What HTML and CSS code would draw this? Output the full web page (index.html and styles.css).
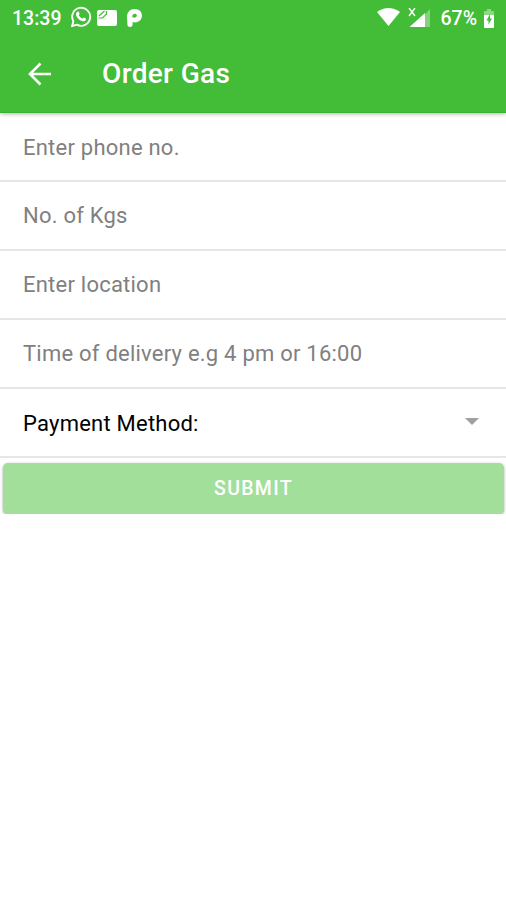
FILE: index.html
```html
<!DOCTYPE html>
<html lang="en">

<head>
    <meta charset="UTF-8">
    <meta name="viewport" content="width=device-width, initial-scale=1.0">
    <title>Order Gas</title>
    <link rel="stylesheet" href="styles.css">
</head>

<body>
    <header class="header">
        <div class="status-bar">
            <div class="status-left">
                <span class="clock">13:39</span>
                <svg class="icon-whatsapp" width="22" height="22" viewBox="0 0 22 22">
                    <path d="M2 20.2l1.4-4.9a9 9 0 1 1 3.5 3.4z" fill="none" stroke="#fff" stroke-width="1.9" stroke-linejoin="round" />
                    <path d="M7.5 5.8c.5-.4 1.1-.3 1.3.2l.8 1.8c.1.4-.6 1.2-.8 1.5.8 1.6 2 2.7 3.6 3.4.4-.3 1.1-1.3 1.5-1.1l1.9.9c.6.3-.1 2-.9 2.5-1 .6-2.3.5-4.2-.5-2-1-3.6-2.8-4.4-4.6-.7-1.7-.1-3.2 1.2-4.1z" fill="#fff" />
                </svg>
                <svg class="icon-card" width="20" height="16" viewBox="0 0 20 16">
                    <path d="M2 0H18a2 2 0 0 1 2 2v12a2 2 0 0 1-2 2H2a2 2 0 0 1-2-2V2a2 2 0 0 1 2-2z" fill="#fff" />
                    <path d="M1.5 8h4L9.500 4V1M2 6L7.500 1" fill="none" stroke="#43bc37" stroke-width="1.2" />
                </svg>
                <svg class="icon-p" width="15" height="18" viewBox="0 0 15 18">
                    <path d="M0 7.500C0 3 3.400 0 7.600 0 11.800 0 15 2.800 15 6.600c0 4-3.200 6.800-7 6.800-.9 0-1.700-.1-2.400-.4V15.300a2.600 2.600 0 0 1-5.200 0zM5.200 7.800C5.800 9 9.800 9.200 9.800 6.600 9.800 3.800 5.200 4 5.200 7.800z" fill="#fff" fill-rule="evenodd" />
                </svg>
            </div>
            <div class="status-right">
                <svg class="icon-wifi" width="23" height="18" viewBox="0 0 23 18">
                    <path d="M0 4Q11.500-4 23 4L11.500 18z" fill="#fff" />
                </svg>
                <svg class="icon-signal" width="23" height="21" viewBox="0 0 23 21">
                    <path d="M22 1v18h-5.500V7z" fill="#fff" opacity=".35" />
                    <path d="M17 5V19H1.500z" fill="#fff" />
                    <path d="M1 0l6 8M7 0L1 8" stroke="#fff" stroke-width="1.400" />
                </svg>
                <span class="percent">67%</span>
                <svg class="icon-battery" width="10" height="19" viewBox="0 0 10 19">
                    <path d="M0 3a1 1 0 0 1 1-1h2V0h4v2h2a1 1 0 0 1 1 1v3H0z" fill="#fff" opacity=".4" />
                    <path d="M0 6h10V18a1 1 0 0 1-1 1H1a1 1 0 0 1-1-1z" fill="#fff" />
                    <path d="M6 5L2.500 11.500h2v4L8 9.500H6z" fill="#43bc37" />
                </svg>
            </div>
        </div>
        <div class="toolbar">
            <button class="back" type="button" aria-label="Back">
                <svg width="24" height="24" viewBox="0 0 24 24">
                    <path d="M23 12H2.500M12.500 1.500L2 12l10.500 10.500" fill="none" stroke="#fff" stroke-width="2.600" />
                </svg>
            </button>
            <h1 class="title">Order Gas</h1>
        </div>
    </header>

    <form class="order-form">
        <input class="field" type="text" placeholder="Enter phone no.">
        <input class="field" type="text" placeholder="No. of Kgs">
        <input class="field" type="text" placeholder="Enter location">
        <input class="field" type="text" placeholder="Time of delivery e.g 4 pm or 16:00">
        <div class="field select">
            <span>Payment Method:</span>
            <span class="arrow"></span>
        </div>
        <button class="submit" type="submit" disabled>SUBMIT</button>
    </form>
</body>

</html>
```
FILE: styles.css
```css
* {
    box-sizing: border-box;
}

body {
    margin: 0;
    background-color: #fff;
    font-family: Roboto, sans-serif;
}

.header {
    height: 113px;
    background-color: #43bc37;
    border-bottom: 1px solid #3cb031;
    box-shadow: 0 1px 4px rgba(0, 0, 0, 0.3);
    color: #fff;
}

.status-bar {
    display: flex;
    justify-content: space-between;
    height: 36px;
    padding: 0 12px;
    font-size: 19.5px;
    font-weight: 500;
}

.status-left,
.status-right {
    display: flex;
    align-items: center;
}

.icon-whatsapp {
    margin-left: 9px;
    margin-bottom: 2px;
}

.icon-card {
    margin-left: 5px;
    margin-bottom: 1px;
}

.icon-p {
    margin-left: 10px;
}

.icon-wifi {
    margin-bottom: 2px;
}

.icon-signal {
    margin-left: 8px;
}

.percent {
    margin-left: 9px;
}

.icon-battery {
    margin-left: 7px;
}

.toolbar {
    display: flex;
    align-items: center;
    height: 75px;
    padding-left: 28px;
}

.back {
    display: flex;
    padding: 0;
    border: none;
    background: none;
}

.title {
    margin: 0 0 0 50px;
    font-size: 28px;
    font-weight: 500;
    letter-spacing: 0.35px;
}

.order-form {
    display: flex;
    flex-direction: column;
}

.field {
    width: 100%;
    height: 69px;
    padding: 0 27px 0 23px;
    border: none;
    border-bottom: 2px solid #e6e6e6;
    background: none;
    color: #000;
    font-family: inherit;
    font-size: 22px;
    letter-spacing: 0.23px;
    outline: none;
}

.field:first-child {
    padding-top: 1px;
}

.field::placeholder {
    color: #808080;
}

.select {
    display: flex;
    align-items: center;
    justify-content: space-between;
    padding-top: 1px;
}

.arrow {
    margin-bottom: 4px;
    border-top: 7px solid #a0a0a0;
    border-left: 7px solid transparent;
    border-right: 7px solid transparent;
}

.submit {
    height: 51px;
    margin: 5px 2px 0 3px;
    padding: 0 0 1px;
    border: none;
    border-radius: 5px;
    background-color: #a1df9b;
    box-shadow: 0 1px 3px rgba(0, 0, 0, 0.35);
    color: #fff;
    font-family: inherit;
    font-size: 19.5px;
    font-weight: 500;
    letter-spacing: 1.3px;
}
```
